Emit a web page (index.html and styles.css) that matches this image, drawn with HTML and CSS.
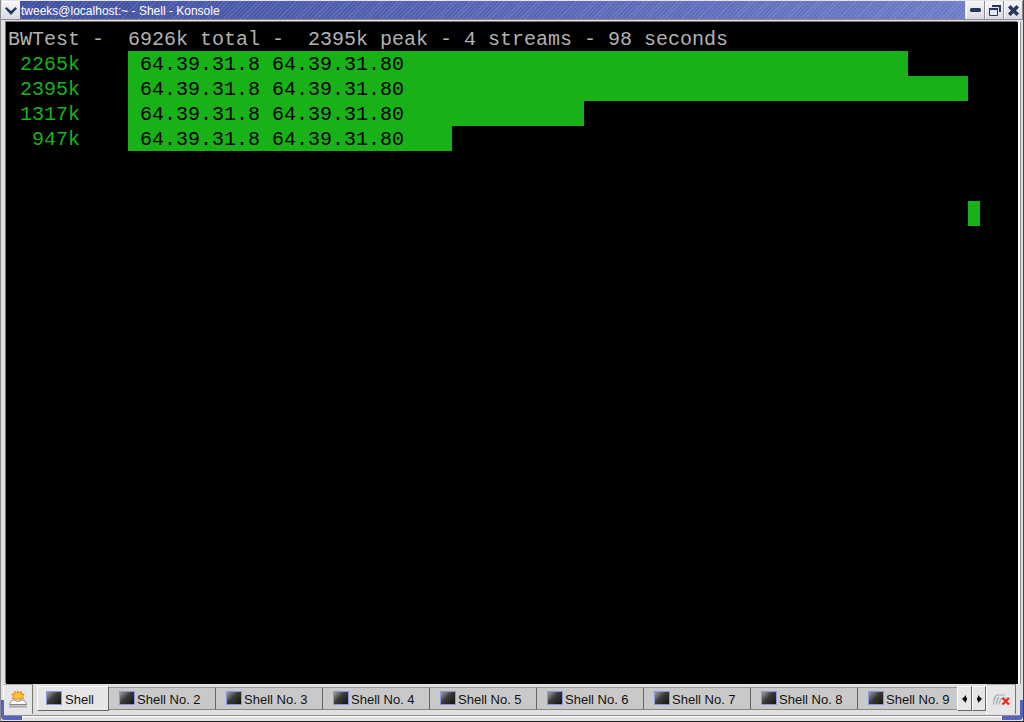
FILE: index.html
```html
<!DOCTYPE html>
<html lang="en">
<head>
<meta charset="utf-8">
<title>tweeks@localhost:~ - Shell - Konsole</title>
<link rel="stylesheet" href="styles.css">
</head>
<body>
<div class="window">
  <header class="titlebar">
    <button class="menu-btn" aria-label="Window menu">
      <svg width="12" height="8" viewBox="0 0 12 8"><path d="M0 1.500L1.500 0 6 4 10.500 0 12 1.500 6 8z" fill="#26365f"/></svg>
    </button>
    <div class="title">tweeks@localhost:~ - Shell - Konsole</div>
    <button class="win-btn" aria-label="Minimize">
      <svg width="11" height="4" viewBox="0 0 11 4"><rect width="11" height="4" rx="1.500" fill="#26365f"/></svg>
    </button>
    <button class="win-btn" aria-label="Restore">
      <svg width="12" height="11" viewBox="0 0 12 11"><path d="M3 0h9v7h-2V2H3z" fill="#26365f"/><path d="M.5 3.500h8v7h-8z" fill="#e6e7ee" stroke="#26365f"/><rect y="3" width="9" height="2" fill="#26365f"/></svg>
    </button>
    <button class="win-btn" aria-label="Close">
      <svg width="11" height="11" viewBox="0 0 11 11"><path d="M0 2.500L2.500 0 5.500 3 8.500 0 11 2.500 8 5.500 11 8.500 8.500 11 5.500 8 2.500 11 0 8.500 3 5.500z" fill="#26365f"/></svg>
    </button>
  </header>
  <main class="terminal">
    <div class="line">BWTest -  6926k total -  2395k peak - 4 streams - 98 seconds</div>
    <div class="line green"> 2265k    <span class="bar" style="width:780px"> 64.39.31.8 64.39.31.80</span></div>
    <div class="line green"> 2395k    <span class="bar" style="width:840px"> 64.39.31.8 64.39.31.80</span></div>
    <div class="line green"> 1317k    <span class="bar" style="width:456px"> 64.39.31.8 64.39.31.80</span></div>
    <div class="line green">  947k    <span class="bar" style="width:324px"> 64.39.31.8 64.39.31.80</span></div>
    <div class="line"></div>
    <div class="line"></div>
    <div class="line cursor-line"><span class="cursor"></span></div>
  </main>
  <footer class="tabbar">
    <button class="corner-btn" aria-label="New session">
      <svg width="18" height="17" viewBox="0 0 18 17"><path d="M9 0l1.200 2 2.300-1.500-.3 2.700 3-.2-1.700 2.300 1.500 1.700-2.500.5V8H5.500v-.5L3 7l1.500-1.700-1.700-2.300 3 .2L5.500.5 7.800 2z" fill="#f7c52e" stroke="#ec7d1a" stroke-width=".9"/><path d="M.5 13.500c.5-2 2-4.500 4-4.500 2 0 3.500 .8 4.500 2 1-1.200 2.500-2 4.500-2 2 0 3.500 2.500 4 4.500z" fill="#fff" stroke="#85858c"/><path d="M0 15.500h18" stroke="#a8a8ae" stroke-width="2"/></svg>
    </button>
    <div class="tabs">
      <div class="tab active"><span class="tab-icon"></span><span class="tab-label">Shell</span></div>
      <div class="tab"><span class="tab-icon"></span><span class="tab-label">Shell No. 2</span></div>
      <div class="tab"><span class="tab-icon"></span><span class="tab-label">Shell No. 3</span></div>
      <div class="tab"><span class="tab-icon"></span><span class="tab-label">Shell No. 4</span></div>
      <div class="tab"><span class="tab-icon"></span><span class="tab-label">Shell No. 5</span></div>
      <div class="tab"><span class="tab-icon"></span><span class="tab-label">Shell No. 6</span></div>
      <div class="tab"><span class="tab-icon"></span><span class="tab-label">Shell No. 7</span></div>
      <div class="tab"><span class="tab-icon"></span><span class="tab-label">Shell No. 8</span></div>
      <div class="tab last"><span class="tab-icon"></span><span class="tab-label">Shell No. 9</span></div>
    </div>
    <button class="arrow" aria-label="Previous tab"><svg width="5" height="8" viewBox="0 0 5 8"><path d="M0 4L4 0v2.500h1v3H4V8z" fill="#111"/></svg></button>
    <button class="arrow narrow" aria-label="Next tab"><svg width="5" height="8" viewBox="0 0 5 8"><path d="M5 4L1 0v2.500H0v3h1V8z" fill="#111"/></svg></button>
    <button class="corner-btn" aria-label="Close session">
      <svg width="17" height="11" viewBox="0 0 17 11"><path d="M.6 10.500c0-4 .6-7 3-9.500h8M3.500 10.500c0-3 .5-5.500 2.500-7.500M6.500 10.500c0-3 .5-5 2.500-6.500h5" fill="none" stroke="#a0aab6" stroke-width="1.200"/><path d="M9.500 4l6.500 6.500M16 4l-6.500 6.500" stroke="#e62a1c" stroke-width="2.300"/></svg>
    </button>
  </footer>
  <div class="strip"></div>
  <span class="corner corner-left"></span>
  <span class="corner corner-right"></span>
</div>
</body>
</html>
```
FILE: styles.css
```css
* { box-sizing: border-box; }
html, body { margin: 0; height: 100%; }
body { width: 1024px; height: 722px; overflow: hidden; background: #fff; font-family: "Liberation Sans", Arial, sans-serif; }
button { font: inherit; padding: 0; margin: 0; display: flex; align-items: center; justify-content: center; }
.window { position: relative; width: 1024px; height: 722px; display: flex; flex-direction: column; background: #e0e0e0; border-left: 1px solid #8a8a8a; border-right: 1px solid #444; border-bottom: 1px solid #222; overflow: hidden; }

.titlebar { height: 20px; flex: none; display: flex; padding: 1px 0 0 1px; background: #e4e4e4; border-bottom: 1px solid #8c8c8c; }
.menu-btn { width: 18px; height: 18px; border: 0; border-top: 1px solid #fff; background: linear-gradient(#f6f6f8, #d8d9e2); }
.title { flex: 1; height: 18px; margin-right: 1px; color: #fff; font-size: 12px; line-height: 20px; padding-left: 1px;
  background:
    repeating-linear-gradient(135deg, rgba(255,255,255,.12) 0 1px, rgba(0,0,0,0) 1px 3px),
    linear-gradient(90deg, #3f4f9f, #6d7ac8); }
.win-btn { width: 19px; height: 18px; border: 0; border-left: 1px solid #fff; border-right: 1px solid #8a8a8a; background: linear-gradient(#f6f6f8, #d8d9e2); }

.terminal { flex: none; height: 662px; margin: 2px 5px 0; padding: 4px 0 0 2px; background: #000; color: #b2b2b2; font: 20px/27px "Liberation Mono", "Courier New", monospace; box-shadow: -1px -1px 0 #777, 2px 0 0 #fff, 3px 0 0 #8a8a8a; }
.line { height: 25px; white-space: pre; }
.green { color: #18b218; }
.bar { display: inline-block; height: 25px; background: #18b218; color: #000; vertical-align: top; }
.cursor-line { padding-left: 960px; }
.cursor { display: block; width: 12px; height: 25px; background: #18b218; }

.tabbar { flex: none; height: 32px; display: flex; align-items: flex-start; padding: 0 7px 0 2px; border-bottom: 1px solid #8c8c8c; }
.corner-btn { width: 30px; height: 30px; flex: none; border: 0; border-top: 1px solid #aaa; border-left: 1px solid #fff; border-right: 1px solid #777; background: #e6e6e6; }
.tabs { flex: 1; display: flex; margin: 2px 0 0 4px; min-width: 0; overflow: hidden; }
.tab { width: 107px; height: 23px; margin-top: 1px; flex: none; display: flex; align-items: center; gap: 2px; padding: 0 0 2px 10px; font-size: 13px; color: #111; background: #c9c9c9; border-right: 1px solid #666; border-bottom: 1px solid #888; border-top: 1px solid #999; }
.tab.active { width: 72px; height: 25px; margin-top: 0; padding: 0 0 2px 8px; gap: 3px; background: #e6e6e6; border: 1px solid #fff; border-right-color: #666; border-bottom-color: #666; }
.tab.last { width: 99px; border-right: 0; }
.tab-icon { width: 16px; height: 14px; flex: none; border: 1px solid #8b97e0; background: linear-gradient(135deg, #a0a0a0 0, #3a3a3a 45%, #141414 100%); }
.tab-label { padding-top: 3px; }
.arrow { width: 15px; height: 25px; margin-top: 2px; flex: none; border: 1px solid #fff; border-right-color: #666; border-bottom-color: #666; background: #e6e6e6; }
.arrow.narrow { width: 14px; }
.strip { flex: 1; border-top: 1px solid #fff; }

.corner { position: absolute; bottom: 1px; width: 21px; height: 20px; border-bottom: 4px solid #5563bb; }
.corner-left { left: 0; border-left: 3px solid #5563bb; border-bottom-left-radius: 4px; }
.corner-right { right: 0; border-right: 3px solid #5563bb; border-bottom-right-radius: 4px; }
```
